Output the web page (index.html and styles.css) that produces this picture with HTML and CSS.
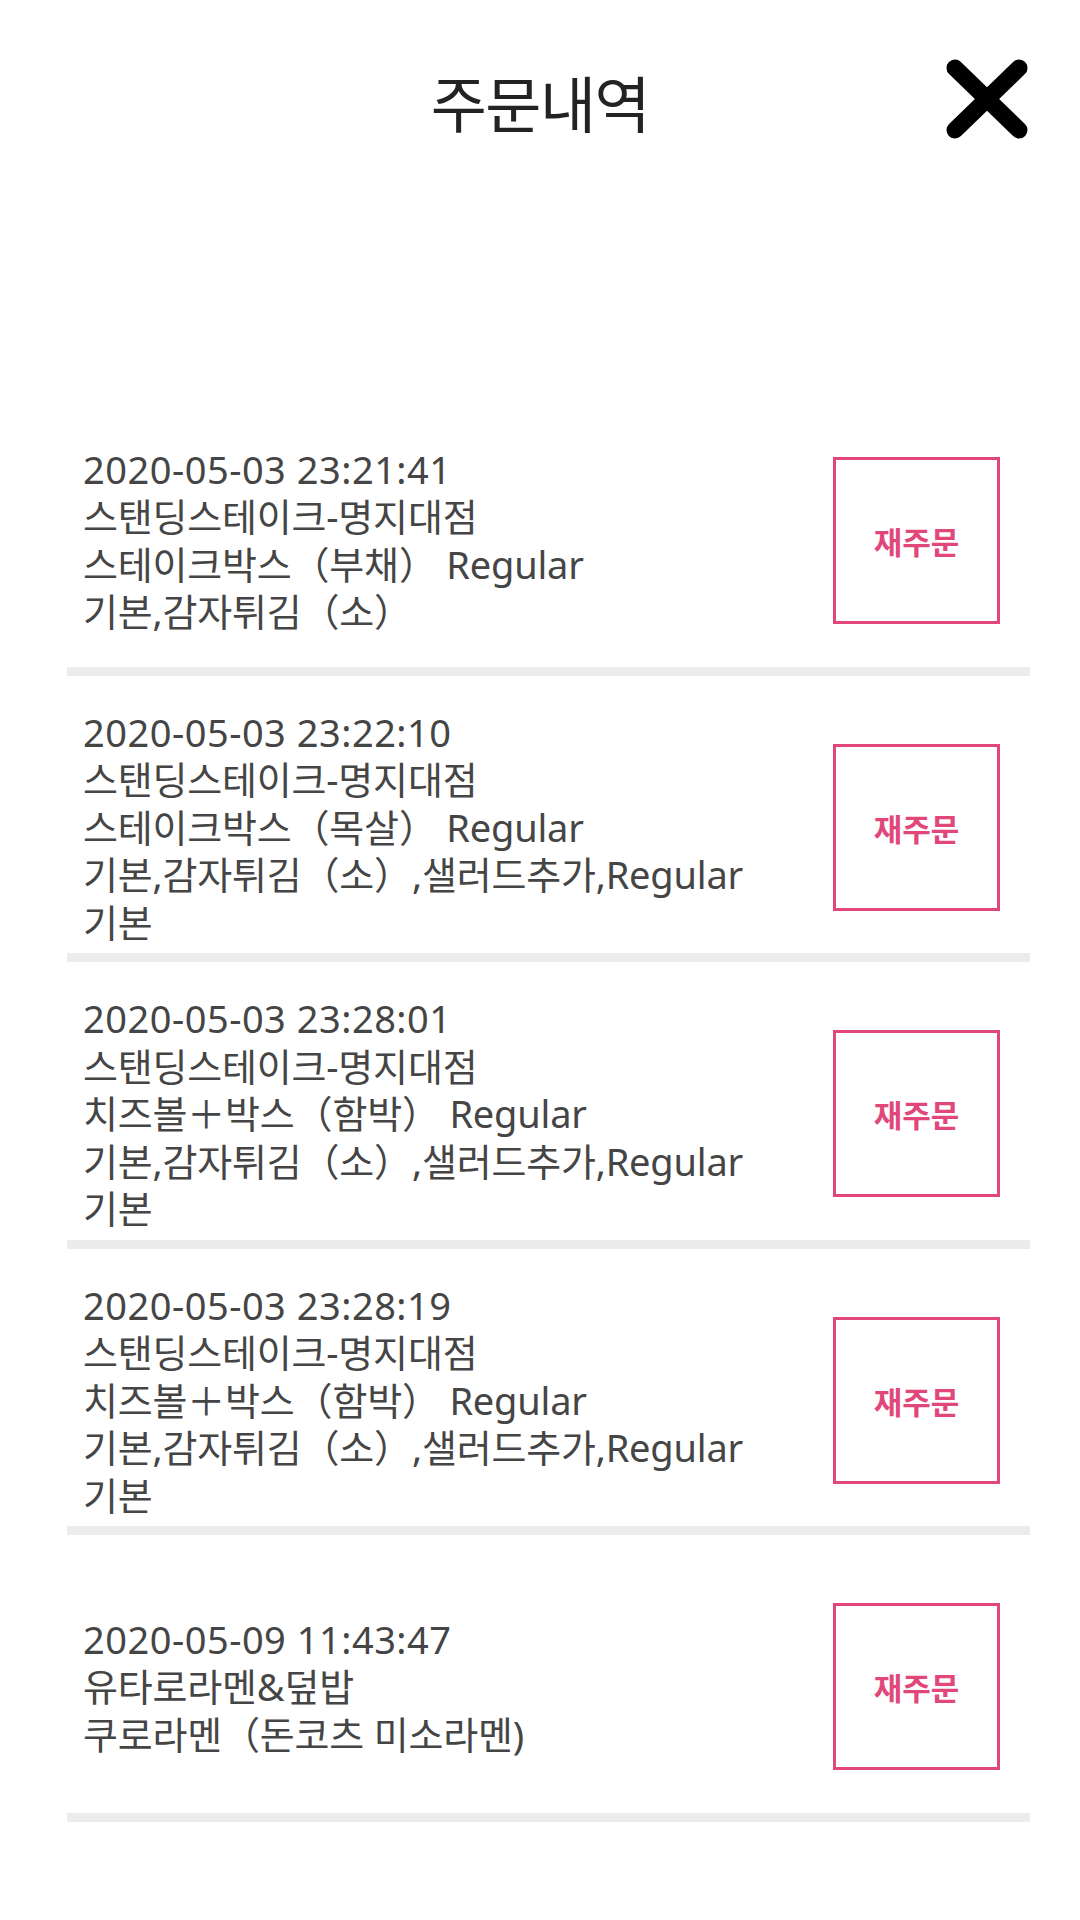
FILE: index.html
```html
<!DOCTYPE html>
<html lang="ko">
<head>
    <meta charset="UTF-8">
    <meta name="viewport" content="width=device-width, initial-scale=1.0">
    <title>주문내역</title>
    <link rel="stylesheet" href="styles.css">
</head>
<body>
    <div class="page">
        <header class="top">
            <span></span>
            <h1>주문내역</h1>
            <a href="#" class="close" aria-label="닫기">
                <svg width="84" height="82" viewBox="0 0 84 82">
                    <line x1="10" y1="10" x2="74" y2="72" />
                    <line x1="74" y1="10" x2="10" y2="72" />
                </svg>
            </a>
        </header>

        <ul class="orders">
            <li class="order">
                <div class="info">
                    <p class="date">2020-05-03 23:21:41</p>
                    <p>스탠딩스테이크-명지대점</p>
                    <p>스테이크박스（부채） Regular</p>
                    <p>기본,감자튀김（소）</p>
                </div>
                <button class="reorder">재주문</button>
            </li>
            <li class="order">
                <div class="info">
                    <p class="date">2020-05-03 23:22:10</p>
                    <p>스탠딩스테이크-명지대점</p>
                    <p>스테이크박스（목살） Regular</p>
                    <p>기본,감자튀김（소）,샐러드추가,Regular</p>
                    <p>기본</p>
                </div>
                <button class="reorder">재주문</button>
            </li>
            <li class="order">
                <div class="info">
                    <p class="date">2020-05-03 23:28:01</p>
                    <p>스탠딩스테이크-명지대점</p>
                    <p>치즈볼＋박스（함박） Regular</p>
                    <p>기본,감자튀김（소）,샐러드추가,Regular</p>
                    <p>기본</p>
                </div>
                <button class="reorder">재주문</button>
            </li>
            <li class="order">
                <div class="info">
                    <p class="date">2020-05-03 23:28:19</p>
                    <p>스탠딩스테이크-명지대점</p>
                    <p>치즈볼＋박스（함박） Regular</p>
                    <p>기본,감자튀김（소）,샐러드추가,Regular</p>
                    <p>기본</p>
                </div>
                <button class="reorder">재주문</button>
            </li>
            <li class="order">
                <div class="info">
                    <p class="date">2020-05-09 11:43:47</p>
                    <p>유타로라멘&amp;덮밥</p>
                    <p>쿠로라멘（돈코츠 미소라멘)</p>
                </div>
                <button class="reorder">재주문</button>
            </li>
        </ul>
    </div>
</body>
</html>
```

FILE: styles.css
```css
body {
    margin: 0;
    padding: 0;
    background: #ffffff;
    font-family: "Noto Sans", "Noto Sans CJK KR", sans-serif;
    color: #454545;
}

.page {
    width: 1080px;
}

/* header */
.top {
    height: 389px;
    box-sizing: border-box;
    padding: 58px 51px 0 51px;
    display: grid;
    grid-template-columns: 84px 1fr 84px;
    align-items: start;
}

.top h1 {
    margin: 8px 0 0 0;
    text-align: center;
    font-family: "Noto Sans CJK KR", sans-serif;
    font-size: 61px;
    line-height: 72px;
    font-weight: 400;
    letter-spacing: -1.5px;
    color: #232323;
}

.close {
    display: block;
    width: 84px;
    height: 82px;
}

.close svg {
    display: block;
}

.close line {
    stroke: #000000;
    stroke-width: 17;
    stroke-linecap: round;
}

/* order list */
.orders {
    list-style: none;
    margin: 0 50px 0 67px;
    padding: 0;
}

.order {
    height: 277.5px;
    box-sizing: content-box;
    border-bottom: 9px solid #ececec;
    padding: 0 30px 0 16px;
    display: flex;
    align-items: center;
    justify-content: space-between;
}

.info {
    margin-top: 26px;
}

.info p {
    margin: 0;
    font-size: 38px;
    line-height: 47.5px;
    letter-spacing: -0.2px;
    white-space: nowrap;
}

.info .date {
    letter-spacing: 0.5px;
}

.reorder {
    margin-top: 26px;
    width: 167px;
    height: 167px;
    box-sizing: border-box;
    border: 3px solid #e2477c;
    background: #ffffff;
    color: #e2477c;
    font-family: "Noto Sans CJK KR", sans-serif;
    font-size: 31px;
    font-weight: 700;
    letter-spacing: 0;
    padding: 0;
}
```
